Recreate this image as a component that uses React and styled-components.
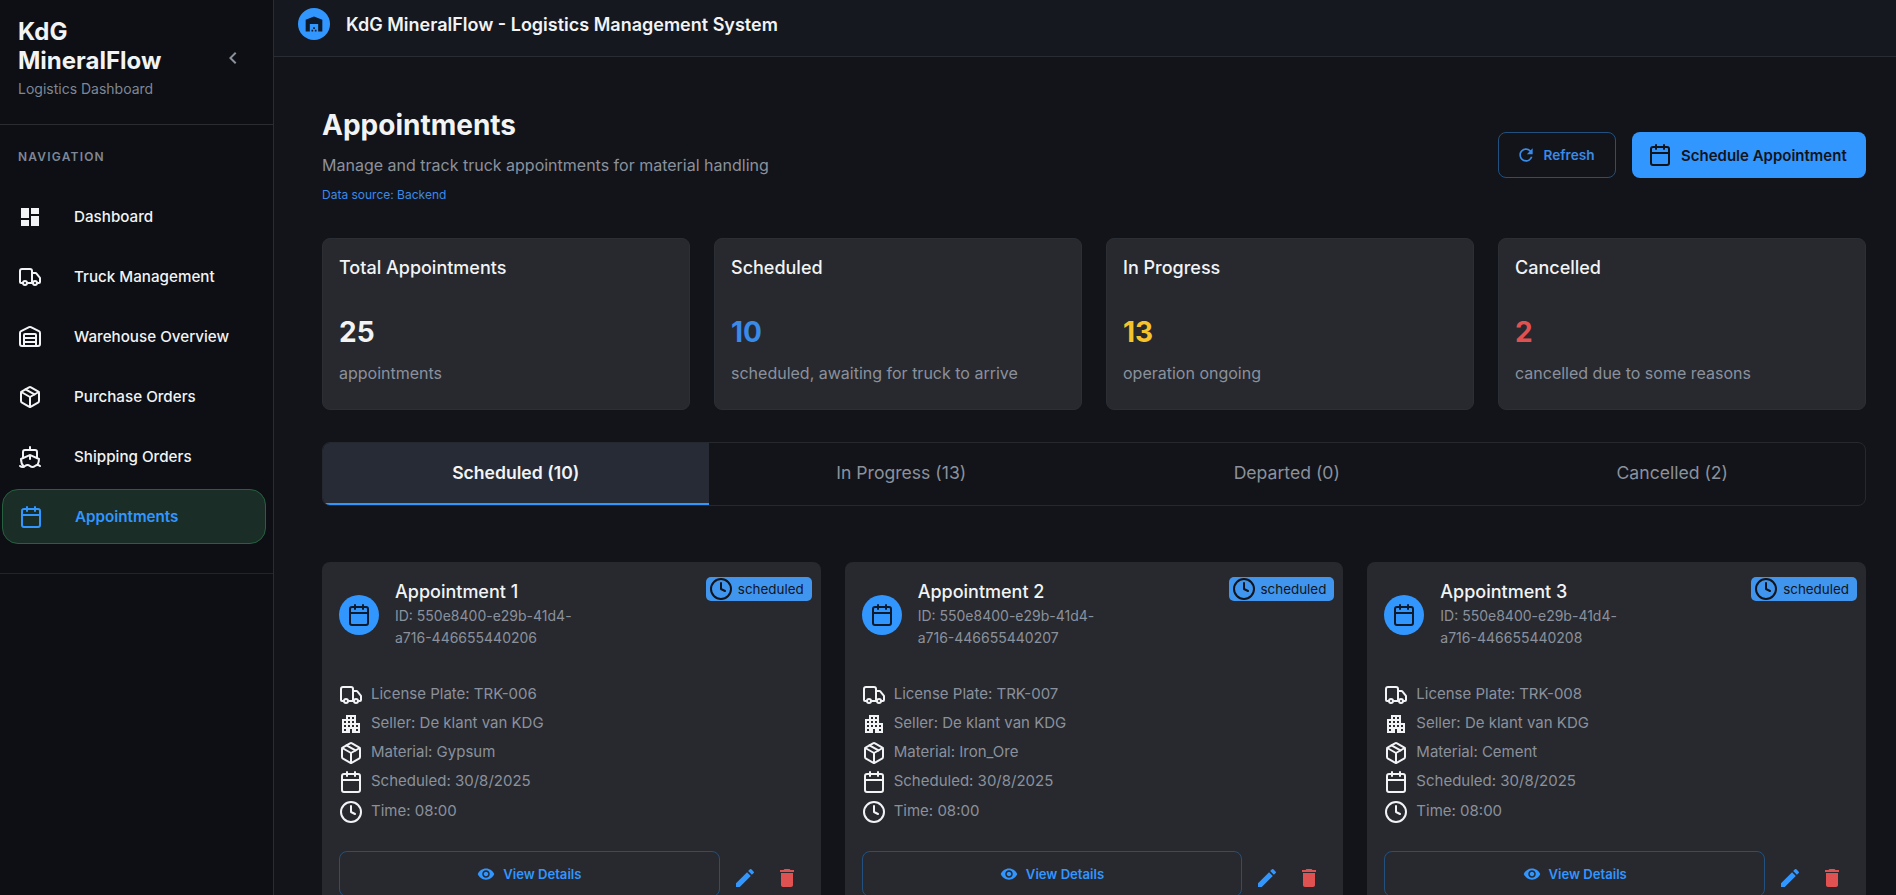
import styled, { createGlobalStyle } from 'styled-components'
import { Truck, Warehouse, Package, Ship, Calendar, Clock } from 'lucide-react'
import {
  MdDashboard,
  MdWarehouse,
  MdRefresh,
  MdApartment,
  MdVisibility,
  MdEdit,
  MdDelete,
  MdChevronLeft,
} from 'react-icons/md'

const GlobalStyle = createGlobalStyle`
  html, body {
    margin: 0;
    padding: 0;
    height: 100%;
    overflow: hidden;
    background: #12141a;
  }
  * {
    box-sizing: border-box;
  }
  body {
    font-family: Inter, "Liberation Sans", sans-serif;
    color: #f1f3f5;
  }
`

const Layout = styled.div`
  display: flex;
  width: 100vw;
  height: 100vh;
  overflow: hidden;
`

const Sidebar = styled.aside`
  width: 274px;
  flex-shrink: 0;
  background: #0d0f14;
  border-right: 1px solid #2a2c34;
`

const SidebarHeader = styled.div`
  display: flex;
  align-items: center;
  justify-content: space-between;
  height: 125px;
  padding: 0 28px 8px 18px;
  border-bottom: 1px solid #2a2c34;
`

const Brand = styled.div`
  width: 180px;
`

const BrandName = styled.div`
  font-size: 24px;
  line-height: 29px;
  font-weight: 700;
  color: #f1f3f5;
`

const BrandSub = styled.div`
  font-size: 14px;
  line-height: 20px;
  margin-top: 4px;
  color: #7f8794;
`

const CollapseButton = styled.div`
  display: flex;
  color: #8b919c;
`

const NavSection = styled.nav`
  padding: 0 2px 29px;
  border-bottom: 1px solid #22242b;
`

const NavTitle = styled.div`
  height: 59px;
  padding: 24px 16px 0;
  font-size: 12px;
  line-height: 16px;
  font-weight: 600;
  letter-spacing: 1.2px;
  color: #7f8794;
`

const NavItem = styled.div`
  display: flex;
  align-items: center;
  gap: 32px;
  width: 264px;
  height: 55px;
  margin-top: 5px;
  padding-left: ${({ $active }) => ($active ? '16px' : '15px')};
  border-radius: 16px;
  border: 1px solid ${({ $active }) => ($active ? '#27603f' : 'transparent')};
  background: ${({ $active }) => ($active ? '#1a2e27' : 'transparent')};
  color: ${({ $active }) => ($active ? '#3296ff' : '#f1f3f5')};
  font-size: 15.2px;
  font-weight: ${({ $active }) => ($active ? 600 : 500)};
`

const Main = styled.main`
  flex: 1;
  min-width: 0;
`

const TopBar = styled.header`
  display: flex;
  align-items: center;
  gap: 16px;
  height: 57px;
  padding: 0 24px 8px 24px;
  background: #16181f;
  border-bottom: 1px solid #2a2c34;
`

const TopLogo = styled.div`
  display: flex;
  align-items: center;
  justify-content: center;
  width: 32px;
  height: 32px;
  border-radius: 50%;
  background: #3296ff;
  color: #0d1a2c;
`

const TopTitle = styled.div`
  font-size: 18px;
  font-weight: 600;
  color: #f1f3f5;
`

const Content = styled.div`
  padding: 50px 30px 0 48px;
`

const PageHeader = styled.div`
  display: flex;
  align-items: flex-start;
  justify-content: space-between;
`

const PageTitle = styled.h1`
  margin: 0;
  font-size: 28px;
  line-height: 36px;
  font-weight: 700;
  color: #f1f3f5;
`

const PageSub = styled.p`
  margin: 10px 0 0;
  font-size: 16px;
  line-height: 24px;
  color: #8b919c;
`

const DataSource = styled.div`
  margin-top: 10px;
  font-size: 12px;
  line-height: 16px;
  color: #3a8ae8;
`

const HeaderActions = styled.div`
  display: flex;
  gap: 16px;
  margin-top: 25px;
`

const Button = styled.button`
  display: flex;
  align-items: center;
  justify-content: center;
  height: 46px;
  border-radius: 8px;
  font-family: inherit;
  font-weight: 600;
`

const RefreshButton = styled(Button)`
  gap: 8px;
  width: 118px;
  padding: 0 4px 0 0;
  font-size: 13.6px;
  color: #3a8ae8;
  background: transparent;
  border: 1px solid #22517f;
`

const ScheduleButton = styled(Button)`
  justify-content: flex-start;
  gap: 9px;
  width: 234px;
  padding: 0 0 0 16px;
  font-size: 15px;
  color: #12141a;
  background: #3296ff;
  border: none;
`

const StatsGrid = styled.div`
  display: grid;
  grid-template-columns: repeat(4, 1fr);
  gap: 24px;
  margin-top: 35px;
`

const StatCard = styled.div`
  height: 172px;
  padding: 17px 16px;
  background: #27292f;
  border: 1px solid #2c2e35;
  border-radius: 8px;
`

const StatTitle = styled.div`
  font-size: 18px;
  line-height: 24px;
  font-weight: 500;
  color: #f1f3f5;
`

const StatValue = styled.div`
  margin-top: 35px;
  font-size: 28px;
  line-height: 34px;
  font-weight: 700;
  color: ${({ $color }) => $color};
`

const StatNote = styled.div`
  margin-top: 12px;
  font-size: 16px;
  line-height: 24px;
  color: #8b919c;
`

const Tabs = styled.div`
  display: grid;
  grid-template-columns: repeat(4, 1fr);
  height: 64px;
  margin-top: 32px;
  border: 1px solid #262830;
  border-radius: 8px;
  overflow: hidden;
`

const Tab = styled.div`
  display: flex;
  align-items: center;
  justify-content: center;
  padding-bottom: 1px;
  font-size: 17.6px;
  font-weight: ${({ $active }) => ($active ? 600 : 400)};
  color: ${({ $active }) => ($active ? '#f1f3f5' : '#8b919c')};
  background: ${({ $active }) => ($active ? '#272b36' : 'transparent')};
  border-bottom: 2px solid ${({ $active }) => ($active ? '#3296ff' : 'transparent')};
`

const CardGrid = styled.div`
  display: grid;
  grid-template-columns: repeat(3, 1fr);
  gap: 24px;
  margin-top: 56px;
`

const Card = styled.article`
  position: relative;
  padding: 18px 14px 20px 17px;
  background: #27292f;
  border-radius: 8px;
`

const Badge = styled.div`
  position: absolute;
  top: 15px;
  right: 9px;
  display: flex;
  align-items: center;
  gap: 5px;
  height: 24px;
  padding: 0 8px 0 3px;
  border-radius: 5px;
  background: #4096ee;
  color: #12141a;
  font-size: 13.4px;
`

const CardHeader = styled.div`
  display: flex;
  align-items: center;
  gap: 16px;
`

const Avatar = styled.div`
  display: flex;
  align-items: center;
  justify-content: center;
  flex-shrink: 0;
  width: 40px;
  height: 40px;
  border-radius: 50%;
  background: #3296ff;
  color: #0d1a2c;
`

const CardHeading = styled.div`
  width: 200px;
`

const CardTitle = styled.div`
  font-size: 18px;
  line-height: 24px;
  font-weight: 500;
  color: #f1f3f5;
`

const CardId = styled.div`
  margin-top: 1px;
  font-size: 14px;
  line-height: 22px;
  color: #8b919c;
  overflow-wrap: anywhere;
`

const DetailList = styled.div`
  display: flex;
  flex-direction: column;
  gap: 5.3px;
  margin-top: 33.6px;
`

const DetailRow = styled.div`
  display: flex;
  gap: 8px;
  height: 24px;
  font-size: 15px;
  line-height: 21px;
  color: #8b919c;
`

const DetailIcon = styled.div`
  display: flex;
  align-items: center;
  justify-content: center;
  width: 24px;
  height: 24px;
  color: #f1f3f5;
`

const CardActions = styled.div`
  display: flex;
  align-items: center;
  gap: 2px;
  margin-top: 27.4px;
`

const ViewButton = styled(Button)`
  flex: 1;
  gap: 8px;
  height: 46px;
  margin-right: 3px;
  font-size: 13.1px;
  color: #3296ff;
  background: transparent;
  border: 1px solid #22517f;
`

const IconAction = styled.div`
  display: flex;
  justify-content: center;
  width: 40px;
  padding-top: 8px;
  color: ${({ $color }) => $color};
`

const navItems = [
  { label: 'Dashboard', icon: <MdDashboard size={24} /> },
  { label: 'Truck Management', icon: <Truck size={24} /> },
  { label: 'Warehouse Overview', icon: <Warehouse size={24} /> },
  { label: 'Purchase Orders', icon: <Package size={24} /> },
  { label: 'Shipping Orders', icon: <Ship size={24} /> },
  { label: 'Appointments', icon: <Calendar size={24} />, active: true },
]

const stats = [
  { title: 'Total Appointments', value: 25, note: 'appointments', color: '#f1f3f5' },
  { title: 'Scheduled', value: 10, note: 'scheduled, awaiting for truck to arrive', color: '#3a8ae8' },
  { title: 'In Progress', value: 13, note: 'operation ongoing', color: '#f5c32c' },
  { title: 'Cancelled', value: 2, note: 'cancelled due to some reasons', color: '#e05252' },
]

const tabs = ['Scheduled (10)', 'In Progress (13)', 'Departed (0)', 'Cancelled (2)']

const appointments = [
  { name: 'Appointment 1', id: '550e8400-e29b-41d4-a716-446655440206', plate: 'TRK-006', material: 'Gypsum' },
  { name: 'Appointment 2', id: '550e8400-e29b-41d4-a716-446655440207', plate: 'TRK-007', material: 'Iron_Ore' },
  { name: 'Appointment 3', id: '550e8400-e29b-41d4-a716-446655440208', plate: 'TRK-008', material: 'Cement' },
]

const AppointmentCard = ({ appointment }) => {
  const details = [
    { icon: <Truck size={24} />, text: `License Plate: ${appointment.plate}` },
    { icon: <MdApartment size={24} />, text: 'Seller: De klant van KDG' },
    { icon: <Package size={24} />, text: `Material: ${appointment.material}` },
    { icon: <Calendar size={24} />, text: 'Scheduled: 30/8/2025' },
    { icon: <Clock size={24} />, text: 'Time: 08:00' },
  ]

  return (
    <Card>
      <Badge>
        <Clock size={24} />
        scheduled
      </Badge>
      <CardHeader>
        <Avatar>
          <Calendar size={24} />
        </Avatar>
        <CardHeading>
          <CardTitle>{appointment.name}</CardTitle>
          <CardId>{`ID: ${appointment.id}`}</CardId>
        </CardHeading>
      </CardHeader>
      <DetailList>
        {details.map((detail) => (
          <DetailRow key={detail.text}>
            <DetailIcon>{detail.icon}</DetailIcon>
            {detail.text}
          </DetailRow>
        ))}
      </DetailList>
      <CardActions>
        <ViewButton>
          <MdVisibility size={18} />
          View Details
        </ViewButton>
        <IconAction $color="#3296ff">
          <MdEdit size={24} />
        </IconAction>
        <IconAction $color="#e05252">
          <MdDelete size={24} />
        </IconAction>
      </CardActions>
    </Card>
  )
}

const App = () => (
  <Layout>
    <GlobalStyle />
    <Sidebar>
      <SidebarHeader>
        <Brand>
          <BrandName>KdG MineralFlow</BrandName>
          <BrandSub>Logistics Dashboard</BrandSub>
        </Brand>
        <CollapseButton>
          <MdChevronLeft size={24} />
        </CollapseButton>
      </SidebarHeader>
      <NavSection>
        <NavTitle>NAVIGATION</NavTitle>
        {navItems.map((item) => (
          <NavItem key={item.label} $active={item.active}>
            {item.icon}
            {item.label}
          </NavItem>
        ))}
      </NavSection>
    </Sidebar>
    <Main>
      <TopBar>
        <TopLogo>
          <MdWarehouse size={20} />
        </TopLogo>
        <TopTitle>KdG MineralFlow - Logistics Management System</TopTitle>
      </TopBar>
      <Content>
        <PageHeader>
          <div>
            <PageTitle>Appointments</PageTitle>
            <PageSub>Manage and track truck appointments for material handling</PageSub>
            <DataSource>Data source: Backend</DataSource>
          </div>
          <HeaderActions>
            <RefreshButton>
              <MdRefresh size={20} />
              Refresh
            </RefreshButton>
            <ScheduleButton>
              <Calendar size={24} />
              Schedule Appointment
            </ScheduleButton>
          </HeaderActions>
        </PageHeader>
        <StatsGrid>
          {stats.map((stat) => (
            <StatCard key={stat.title}>
              <StatTitle>{stat.title}</StatTitle>
              <StatValue $color={stat.color}>{stat.value}</StatValue>
              <StatNote>{stat.note}</StatNote>
            </StatCard>
          ))}
        </StatsGrid>
        <Tabs>
          {tabs.map((tab, index) => (
            <Tab key={tab} $active={index === 0}>
              {tab}
            </Tab>
          ))}
        </Tabs>
        <CardGrid>
          {appointments.map((appointment) => (
            <AppointmentCard key={appointment.name} appointment={appointment} />
          ))}
        </CardGrid>
      </Content>
    </Main>
  </Layout>
)

export default App
